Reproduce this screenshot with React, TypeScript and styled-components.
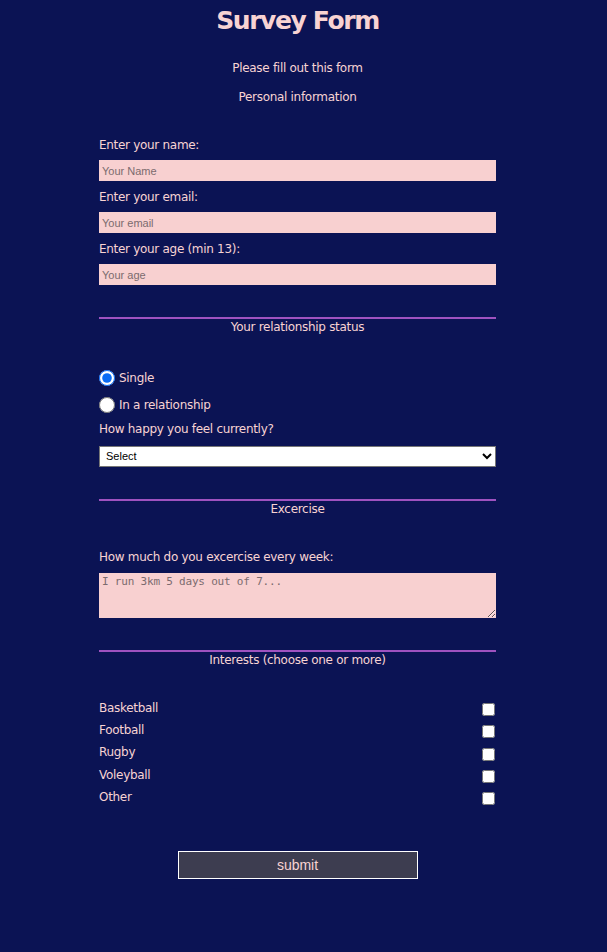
import React from "react";
import styled, { createGlobalStyle } from "styled-components";

const Global = createGlobalStyle`
  html, body { margin: 0; padding: 0; background: #0b1354; }
  body { font-family: "DejaVu Sans", Verdana, sans-serif; color: #f8d3d3; }
`;

const Shell = styled.div`
  padding-right: 12px;
`;

const Page = styled.main`
  width: 397px;
  margin: 0 auto;
  padding-bottom: 72px;
  letter-spacing: -0.3px;
`;

const Title = styled.h1`
  margin: 0;
  padding-top: 6px;
  font-size: 25px;
  line-height: 30px;
  font-weight: bold;
  letter-spacing: -1.4px;
  text-align: center;
  color: #f8d3d3;
`;

const Lead = styled.p<{ $top: number }>`
  margin: ${(p) => p.$top}px 0 0;
  font-size: 12px;
  line-height: 16px;
  text-align: center;
`;

const Fields = styled.div`
  display: flex;
  flex-direction: column;
  margin-top: 32px;
`;

const Label = styled.label<{ $gap?: number; $top?: number }>`
  display: block;
  font-size: 12px;
  line-height: 16px;
  margin-top: ${(p) => p.$top ?? 0}px;
  margin-bottom: ${(p) => p.$gap ?? 7}px;
`;

const TextInput = styled.input`
  box-sizing: border-box;
  width: 100%;
  height: 21px;
  margin: 0 0 8px;
  padding: 0 3px;
  border: none;
  background: #f8d0d0;
  font-family: "Liberation Sans", Arial, sans-serif;
  font-size: 11px;
  letter-spacing: 0;
  &::placeholder { color: #7b6b6e; }
`;

const Divider = styled.hr<{ $top: number }>`
  margin: ${(p) => p.$top}px 0 0;
  border: none;
  height: 2px;
  background: #9f52c0;
`;

const SectionTitle = styled.h2<{ $bottom: number }>`
  margin: 0 0 ${(p) => p.$bottom}px;
  font-size: 12px;
  line-height: 16px;
  font-weight: normal;
  text-align: center;
`;

const RadioRow = styled.label`
  display: flex;
  align-items: center;
  gap: 4px;
  height: 27px;
  font-size: 12px;
`;

const Radio = styled.input`
  margin: 0;
  width: 16px;
  height: 16px;
  accent-color: #0a6cf5;
`;

const Select = styled.select`
  box-sizing: border-box;
  width: 100%;
  height: 21px;
  margin: 0;
  border: 1px solid #767676;
  border-radius: 0;
  background: #fff;
  color: #000;
  font-family: "Liberation Sans", Arial, sans-serif;
  font-size: 11px;
  letter-spacing: 0;
  padding: 0 2px;
`;

const TextArea = styled.textarea`
  display: block;
  box-sizing: border-box;
  width: 100%;
  height: 45px;
  margin: 0;
  padding: 2px 3px;
  border: none;
  background: #f8d0d0;
  font-family: "DejaVu Sans Mono", "Liberation Mono", monospace;
  font-size: 11px;
  letter-spacing: -0.2px;
  resize: vertical;
  &::placeholder { color: #7b6b6e; }
`;

const CheckList = styled.div`
  display: flex;
  flex-direction: column;
`;

const CheckRow = styled.label`
  display: flex;
  align-items: center;
  justify-content: space-between;
  height: 22.3px;
  font-size: 12px;
`;

const Check = styled.input`
  margin: 0 1px 0 0;
  width: 13px;
  height: 13px;
  position: relative;
  top: 2px;
`;

const SubmitRow = styled.div`
  display: flex;
  justify-content: center;
  margin-top: 43px;
`;

const Submit = styled.button`
  width: 240px;
  height: 28px;
  background: #3d3d50;
  border: 1px solid #ffffff;
  color: #f8d3d3;
  font-family: "Liberation Sans", Arial, sans-serif;
  font-size: 14px;
  padding: 0;
`;

export default function App() {
  return (
    <>
      <Global />
      <Shell>
        <Page>
          <Title>Survey Form</Title>
          <Lead $top={24}>Please fill out this form</Lead>
          <Lead $top={13}>Personal information</Lead>
          <Fields>
            <Label htmlFor="name">Enter your name:</Label>
            <TextInput id="name" placeholder="Your Name" />
            <Label htmlFor="email">Enter your email:</Label>
            <TextInput id="email" placeholder="Your email" />
            <Label htmlFor="age">Enter your age (min 13):</Label>
            <TextInput id="age" placeholder="Your age" />
          </Fields>
          <Divider $top={24} />
          <SectionTitle $bottom={29}>Your relationship status</SectionTitle>
          <RadioRow>
            <Radio type="radio" name="rel" defaultChecked />
            Single
          </RadioRow>
          <RadioRow>
            <Radio type="radio" name="rel" />
            In a relationship
          </RadioRow>
          <Label htmlFor="happy" $top={3} $gap={8}>How happy you feel currently?</Label>
          <Select id="happy" defaultValue="select">
            <option value="select">Select</option>
          </Select>
          <Divider $top={32} />
          <SectionTitle $bottom={32}>Excercise</SectionTitle>
          <Label htmlFor="ex" $gap={8}>How much do you excercise every week:</Label>
          <TextArea id="ex" placeholder="I run 3km 5 days out of 7..." />
          <Divider $top={32} />
          <SectionTitle $bottom={29}>Interests (choose one or more)</SectionTitle>
          <CheckList>
            {["Basketball", "Football", "Rugby", "Voleyball", "Other"].map((s) => (
              <CheckRow key={s}>
                {s}
                <Check type="checkbox" />
              </CheckRow>
            ))}
          </CheckList>
          <SubmitRow>
            <Submit type="submit">submit</Submit>
          </SubmitRow>
        </Page>
      </Shell>
    </>
  );
}
